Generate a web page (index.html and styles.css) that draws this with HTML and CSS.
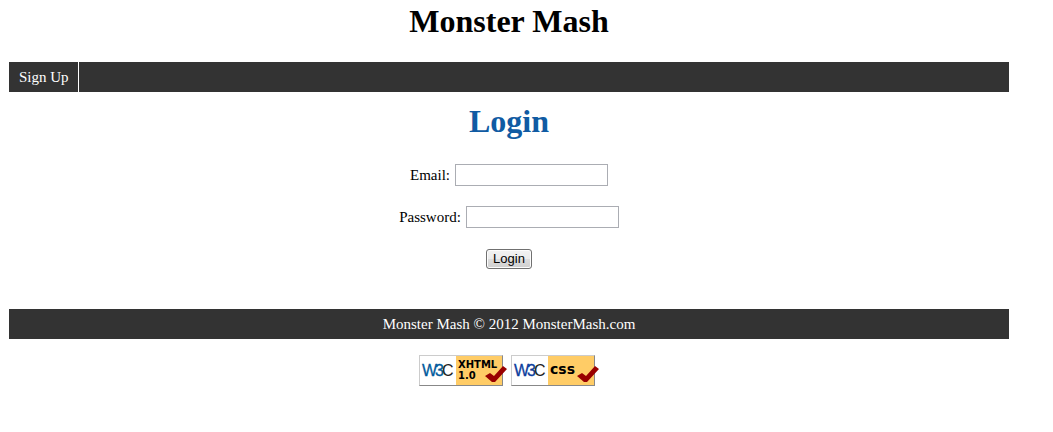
FILE: index.html
```
<!DOCTYPE html>
<html lang="en">
<head>
<meta charset="utf-8">
<title>Monster Mash</title>
<link rel="stylesheet" href="styles.css">
</head>
<body>
<header><h1 class="site-title">Monster Mash</h1></header>
<nav class="nav"><a class="nav-link" href="#">Sign Up</a></nav>
<main>
<h1 class="page-title">Login</h1>
<form class="login-form">
<div class="field"><label for="email">Email:</label><input id="email" type="text"></div>
<div class="field"><label for="password">Password:</label><input id="password" type="password"></div>
<button class="submit" type="submit">Login</button>
</form>
</main>
<footer>
<p class="copyright">Monster Mash © 2012 MonsterMash.com</p>
<div class="badges">
<a class="badge" href="#" aria-label="Valid XHTML 1.0">
<svg width="88" height="31" viewBox="0 0 88 31">
<rect width="84" height="31" fill="#888"/><path d="M0 0H84L83 1H1V30L0 31Z" fill="#ccc"/>
<rect x="1" y="1" width="82" height="29" fill="#fff"/><rect x="37" y="1" width="46" height="29" fill="#fc6"/>
<text class="w3" x="3" y="21">W</text><text class="w3" x="16" y="21">3</text><text class="w3 w3-c" x="23" y="21">C</text>
<text class="badge-text" x="39" y="13">XHTML</text><text class="badge-text" x="39" y="24">1.0</text>
<path d="M66 21L71 18L75 21L84 11L88 14L76 27H73Z" fill="#900"/>
</svg></a>
<a class="badge" href="#" aria-label="Valid CSS">
<svg width="88" height="31" viewBox="0 0 88 31">
<rect width="84" height="31" fill="#888"/><path d="M0 0H84L83 1H1V30L0 31Z" fill="#ccc"/>
<rect x="1" y="1" width="82" height="29" fill="#fff"/><rect x="37" y="1" width="46" height="29" fill="#fc6"/>
<text class="w3 w3-dark" x="3" y="21">W</text><text class="w3 w3-dark" x="16" y="21">3</text><text class="w3 w3-c" x="23" y="21">C</text>
<text class="badge-text badge-css" x="39" y="19">css</text>
<path d="M66 21L71 18L75 21L84 11L88 14L76 27H73Z" fill="#900"/>
</svg></a>
</div>
</footer>
</body>
</html>
```
FILE: styles.css
```
body {
  margin: 0;
  padding: 3px 44px 16px 9px;
  background: #fff;
  color: #000;
  font: 15px/20px "Liberation Serif", "Times New Roman", serif;
}
.site-title, .page-title {
  margin: 0;
  font-size: 32px;
  line-height: 36px;
  text-align: center;
}
.nav {
  display: flex;
  margin-top: 23px;
  background: #333;
}
.nav-link {
  padding: 5px 9px 5px 10px;
  border-right: 1px solid #fff;
  color: #fff;
  text-decoration: none;
}
.page-title { margin-top: 11px; color: #105ba3; }
.login-form {
  display: flex;
  flex-direction: column;
  align-items: center;
  gap: 20px;
  margin-top: 25px;
}
.field { display: flex; align-items: center; gap: 5px; }
.field input {
  box-sizing: border-box;
  width: 153px;
  height: 22px;
  padding: 1px 3px;
  border: 1px solid #abadb3;
  background: #fff;
  font: 13px "Liberation Sans", Arial, sans-serif;
}
.submit {
  height: 20px;
  margin-top: 1px;
  padding: 0 6px;
  border: 1px solid #707070;
  border-radius: 3px;
  background: linear-gradient(#f2f2f2, #ebebeb 50%, #ddd 50%, #cfcfcf);
  box-shadow: inset 0 0 0 1px #fcfcfc;
  color: #000;
  font: 13px/18px "Liberation Sans", Arial, sans-serif;
}
.copyright {
  margin: 40px 0 0;
  padding: 5px;
  background: #333;
  color: #fff;
  text-align: center;
}
.badges { display: flex; justify-content: center; gap: 4px; margin-top: 16px; }
.badge, .badge svg { display: block; }
.w3 { fill: #005a9c; stroke: #005a9c; stroke-width: 0.3; font: 16px "Liberation Sans", Arial, sans-serif; }
.w3-dark { fill: #0c3d9d; stroke: #0c3d9d; }
.w3-c { fill: #222; stroke: none; }
.badge-text { fill: #000; font: bold 10px "DejaVu Sans", sans-serif; }
.badge-css { font-size: 14px; }
```
